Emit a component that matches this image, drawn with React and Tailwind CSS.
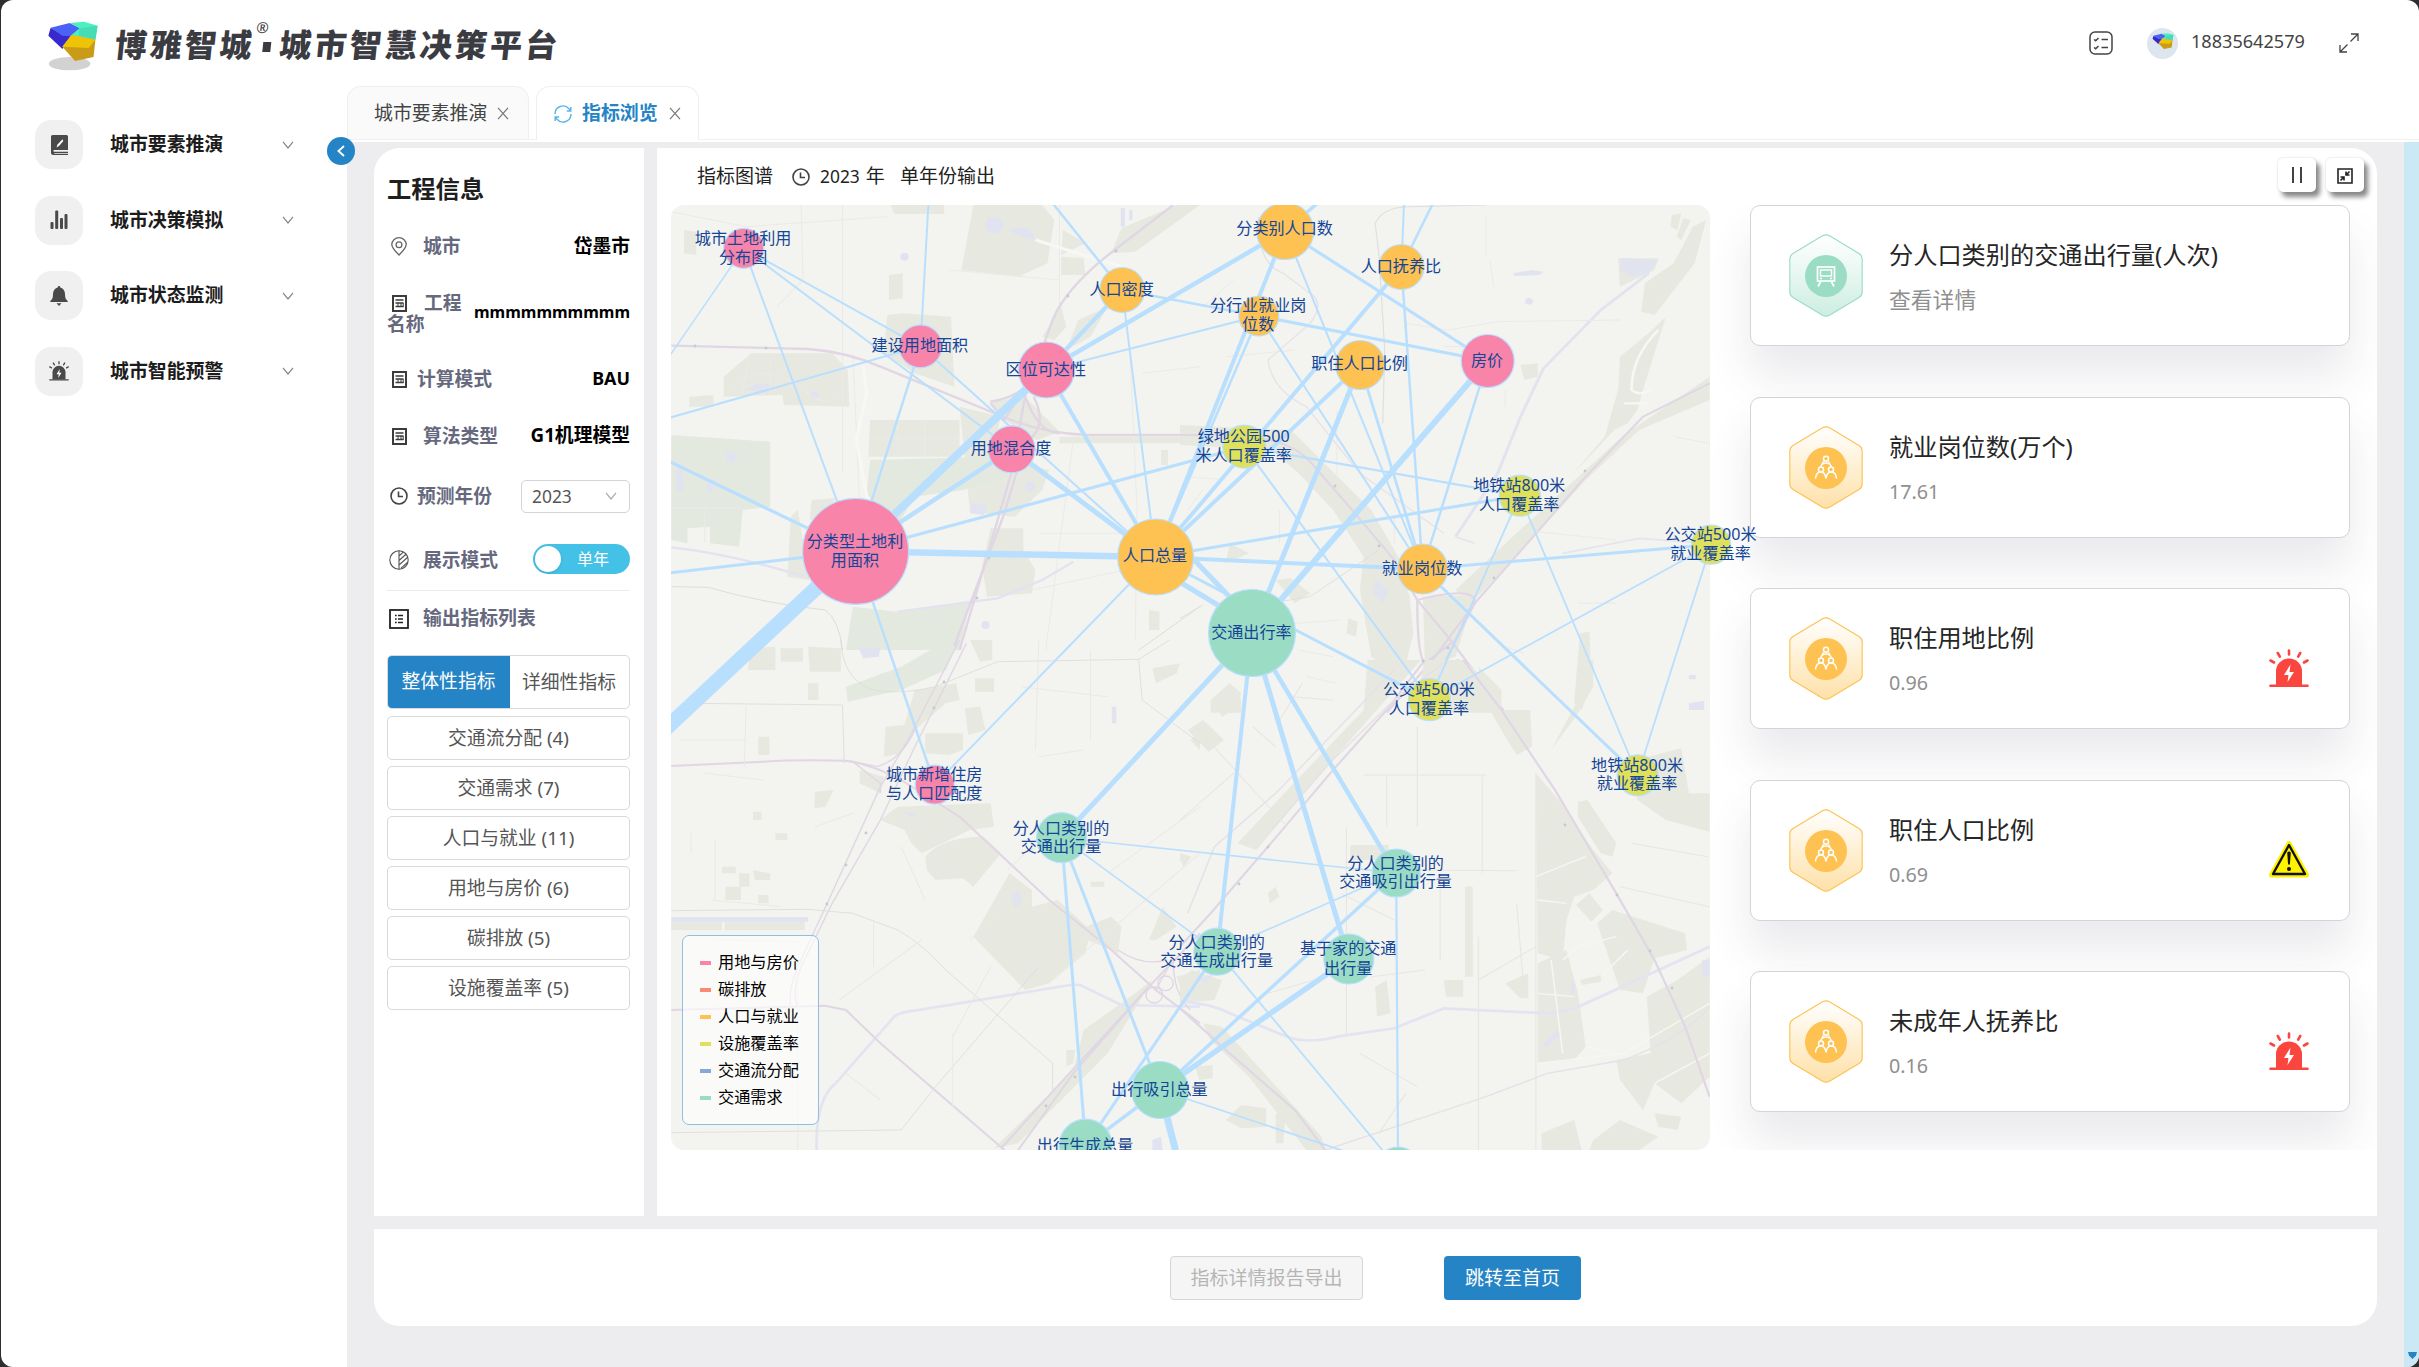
import React from "react";

const PINK = "#f884aa";
const ORANGE = "#fdc252";
const GREEN = "#9bdcc4";
const LIME = "#dfe05c";

const nodes = {
  landMap: { x: 743.7, y: 248.3, r: 20, c: PINK, t: [["城市土地利用", 238.7], ["分布图", 257.3]] },
  built: { x: 920.5, y: 346.3, r: 21.5, c: PINK, t: [["建设用地面积", 345.7]] },
  access: { x: 1046.4, y: 370, r: 28, c: PINK, t: [["区位可达性", 369.3]] },
  mix: { x: 1011.6, y: 449.3, r: 23.5, c: PINK, t: [["用地混合度", 449]] },
  landType: { x: 855.6, y: 551.3, r: 53, c: PINK, t: [["分类型土地利", 541.7], ["用面积", 560.7]] },
  density: { x: 1122.2, y: 290, r: 22.5, c: ORANGE, t: [["人口密度", 289.5]] },
  pop: { x: 1155.6, y: 557, r: 38, c: ORANGE, t: [["人口总量", 556]] },
  popClass: { x: 1285.2, y: 231, r: 28.5, c: ORANGE, t: [["分类别人口数", 228.7]] },
  dependency: { x: 1401.5, y: 267, r: 22.5, c: ORANGE, t: [["人口抚养比", 266.7]] },
  jobsByType: { x: 1258.8, y: 316, r: 20, c: ORANGE, t: [["分行业就业岗", 306], ["位数", 325]] },
  jobHousing: { x: 1360.2, y: 365, r: 24.5, c: ORANGE, t: [["职住人口比例", 364]] },
  price: { x: 1487.7, y: 361, r: 26.5, c: PINK, t: [["房价", 360.3]] },
  park: { x: 1244.3, y: 446.7, r: 21.5, c: LIME, t: [["绿地公园500", 436.7], ["米人口覆盖率", 456]] },
  metroPop: { x: 1519.8, y: 495.7, r: 20.5, c: LIME, t: [["地铁站800米", 486], ["人口覆盖率", 504.3]] },
  busJob: { x: 1711.1, y: 544.7, r: 19.5, c: LIME, t: [["公交站500米", 535], ["就业覆盖率", 553.7]] },
  jobs: { x: 1422.6, y: 569, r: 25, c: ORANGE, t: [["就业岗位数", 568.7]] },
  tripRate: { x: 1252, y: 633, r: 43.5, c: GREEN, t: [["交通出行率", 632.7]] },
  newHousing: { x: 934.8, y: 784.7, r: 19.5, c: PINK, t: [["城市新增住房", 775], ["与人口匹配度", 794]] },
  tripClass: { x: 1061.6, y: 837.7, r: 25, c: GREEN, t: [["分人口类别的", 828.3], ["交通出行量", 846.7]] },
  attractTotal: { x: 1160, y: 1090, r: 28.5, c: GREEN, t: [["出行吸引总量", 1089.3]] },
  produceTotal: { x: 1085.7, y: 1145.7, r: 26.5, c: GREEN, t: [["出行生成总量", 1146]] },
  busPop: { x: 1429.5, y: 699.7, r: 21, c: LIME, t: [["公交站500米", 690], ["人口覆盖率", 708.3]] },
  metroJob: { x: 1637.7, y: 775.3, r: 20.5, c: LIME, t: [["地铁站800米", 765.7], ["就业覆盖率", 784]] },
  attract: { x: 1396.2, y: 873, r: 24, c: GREEN, t: [["分人口类别的", 863.3], ["交通吸引出行量", 881.7]] },
  produce: { x: 1217.3, y: 951.7, r: 23.5, c: GREEN, t: [["分人口类别的", 942.3], ["交通生成出行量", 961]] },
  homeBased: { x: 1348.8, y: 959, r: 25, c: GREEN, t: [["基于家的交通", 949], ["出行量", 968.3]] },
  lower: { x: 1398.1, y: 1169, r: 22, c: GREEN, t: [] },
};

const edges = [
  ["landMap", [660, 370], 1.5], ["landMap", "landType", 2], ["landMap", "built", 2], ["landMap", "mix", 2],
  ["built", [928.9, 195], 2], ["built", [660, 420.5], 2], ["built", "landType", 2.5], ["built", "pop", 2],
  ["access", "landType", 8], ["access", "pop", 4], ["access", "density", 4], ["access", "popClass", 4.5], ["access", "jobsByType", 2],
  ["mix", "landType", 4.5], ["mix", "pop", 5],
  ["density", [1046, 195], 2.5], ["density", "pop", 2], ["density", "jobsByType", 2.5],
  ["landType", [660, 457], 3.2], ["landType", [660, 574], 3], ["landType", "pop", 6.5], ["landType", [660, 734], 15],
  ["landType", "park", 3], ["landType", "newHousing", 2.5],
  ["popClass", "pop", 4], ["jobsByType", "pop", 2.5], ["dependency", "pop", 4], ["jobHousing", "pop", 4],
  ["popClass", "price", 3.2], ["popClass", "jobs", 2], ["popClass", [1327, 195], 3.5],
  ["dependency", [1404.3, 195], 2], ["dependency", [1437, 195], 2.5], ["dependency", "jobs", 2.5],
  ["jobsByType", "price", 3.2], ["jobsByType", "jobs", 2], ["jobHousing", "jobs", 2.8], ["jobHousing", "tripRate", 5],
  ["price", "tripRate", 6], ["price", "jobs", 2.5], ["park", "metroPop", 2.2], ["park", "busPop", 2],
  ["pop", "metroPop", 3], ["pop", "jobs", 4], ["pop", "busPop", 3], ["pop", "newHousing", 2],
  [[1180, 545], [1244, 612], 5], [[1160, 570], [1226, 610], 5],
  ["jobs", "busJob", 3], ["jobs", "metroJob", 3], ["metroPop", "busPop", 1.8], ["metroPop", "metroJob", 1.8],
  ["busJob", "busPop", 1.8], ["busJob", "metroJob", 1.8],
  ["tripRate", "tripClass", 5], ["tripRate", "produce", 4], ["tripRate", "homeBased", 5], ["tripRate", "attract", 4.5],
  ["tripClass", "attract", 1.6], ["tripClass", "produce", 1.6], ["tripClass", "attractTotal", 3], ["tripClass", "produceTotal", 3],
  ["attract", "produce", 1.6], ["attract", "attractTotal", 3.5], ["attract", "lower", 2.2],
  ["homeBased", "attractTotal", 5.5], ["produce", "produceTotal", 3], ["produce", "lower", 1.8],
  ["attractTotal", "produceTotal", 3.5], ["attractTotal", "lower", 1.8], ["attractTotal", [1178, 1160], 7],
];

const at = (p) => (typeof p === "string" ? [nodes[p].x, nodes[p].y] : p);

function BaseMap() {
  return (
    <g fill="none">
      <rect x="671" y="205" width="1039" height="945" fill="#f3f3ef" />
      {/* north-west quarter */}
      <g transform="translate(660 140) scale(0.34439 0.33333)">
        <g fill="#e7e9e0">
          <path d="M910 195H1110L1145 240L1125 370L1040 410L875 390Z" />
          <path d="M670 195H825V222H680Z" />
          <path d="M1170 270L1235 310L1165 345ZM1165 350L1230 355L1235 405H1165Z" />
          <path d="M1340 265L1500 195H1568L1380 335L1310 340Z" />
          <path d="M185 710L265 640H500L545 690L550 800L360 795L355 765L185 770Z" />
          <path d="M85 770L155 765V800H85Z" />
          <path d="M665 405L705 400V475L665 480ZM660 525L705 520L845 530L855 740L740 700L650 640Z" />
          <path d="M610 840H870V950H605Z" />
          <path d="M870 800L990 830L960 950L1130 990L1110 1050L1030 1130L900 1115Z" />
          <path d="M955 785L1060 770L1160 875L1095 900L1000 840Z" />
          <path d="M1165 500L1180 560L1145 600L1110 590Z" />
          <path d="M1160 890H1568V910H1160Z" />
          <path d="M1215 540L1300 500L1250 590L1180 630Z" />
          <path d="M960 1165H1055V1230L1090 1290L1080 1360L950 1370L935 1280Z" />
          <path d="M380 1130L400 1110L435 1320L370 1310Z" />
          <path d="M1455 930H1475V975H1455ZM1420 1410L1450 1415V1470H1420ZM70 270L105 275V345L70 340Z" />
          <path d="M440 1080L510 1075L470 1130L435 1140Z" />
        </g>
        <g fill="#e4e9e0">
          <path d="M33 885L320 905V1100L240 1110L230 1220L145 1210V1160L80 1165V1210L33 1200Z" />
          <path d="M610 960L960 950L1020 1010L880 1050L740 1070L680 1170L600 1060Z" />
          <path d="M560 1400L690 1415L900 1385L870 1530H540Z" />
        </g>
        <g fill="#e1e3f0">
          <circle cx="970" cy="255" r="26" />
          <path d="M1010 270Q1080 245 1090 300L1050 290Z" />
          <circle cx="710" cy="350" r="12" />
          <path d="M250 750Q290 715 330 740L310 760Z" />
          <circle cx="448" cy="765" r="12" />
          <path d="M905 1090L950 1095L940 1125L900 1120Z" />
          <circle cx="1075" cy="1040" r="15" />
          <path d="M1338 205H1350V260H1338ZM1362 210H1372V240H1362Z" />
          <circle cx="945" cy="1455" r="12" />
          <path d="M190 940L225 935L215 970L195 965ZM140 1020L165 1015L150 1060L135 1050ZM45 1000L60 960L70 1050L50 1055Z" />
        </g>
        <g stroke="#eceae6" strokeWidth="3">
          <path d="M33 215L250 260L660 230M530 195V1000M410 195L415 420L340 500M840 390L1160 420M1160 195V500M560 640L580 1100L620 1200M260 640L240 760M320 650V760M215 740Q300 660 400 740T520 760" />
          <path d="M605 895H870M690 840V950M770 840V950M33 1105H240M130 1105V1210M1365 640L1385 1100L1380 1500M1200 900L1120 1530M1400 700L1568 680M1100 1180H1350M1080 1350L1350 1290" />
        </g>
        <path d="M33 1222Q200 1240 420 1310M690 1415L980 1375L1110 1320L1200 1265" stroke="#e3e2f0" strokeWidth="7" />
        <g stroke="#f7f7f4" strokeWidth="9">
          <path d="M590 680L600 760L570 900L610 1120M1090 300L1340 380" />
        </g>
        <g stroke="#e0d6e4" strokeWidth="7">
          <path d="M33 617L430 627Q540 635 640 680L1020 840Q1120 880 1240 885H1568" />
          <path d="M1490 195L1320 330Q1180 440 1140 540L1060 770L1020 1000L870 1530" />
          <path d="M1085 770Q1130 860 1060 910L1000 1120L850 1530" />
          <path d="M960 785Q1040 770 1070 730M1060 770Q1100 880 1160 880M960 790L1000 840L1030 790" />
        </g>
        <path d="M33 1340L140 1342Q300 1390 480 1410Q520 1440 530 1530M1390 1530L1568 1400" stroke="#d8d8d5" strokeWidth="2.5" />
      </g>
      {/* north-east quarter */}
      <g transform="translate(1180 190) scale(0.38265 0.33333)">
        <g fill="#e7e9e0">
          <path d="M1340 110L1375 90L1345 220L1240 375L1205 365L1215 280L1290 220Z" />
          <path d="M1285 75L1310 70L1300 120L1282 110ZM1315 85L1335 90L1310 150L1298 140Z" />
          <path d="M1145 205H1250L1240 240L1150 290Z" />
          <path d="M890 525L935 520V560L900 570Z" />
          <path d="M1150 500L1225 430L1270 380L1215 580L1195 660L1170 700L1135 720L1020 860L1110 740L1145 600Z" />
          <path d="M1160 735L1384 560V630L1200 720L1060 870L870 1110L760 1240L720 1200L860 1050Z" />
          <path d="M0 705L290 720L360 800L500 960L570 1100L600 1220L610 1330L580 1470L500 1400L470 1200L480 1100L400 960L310 850L240 780L0 765Z" />
          <path d="M635 1220L770 1215L720 1400L640 1430Z" />
          <path d="M635 1420L740 1410L830 1530V1568H640Z" />
          <path d="M1045 1330L1070 1325L1075 1470L1050 1560L1030 1540Z" />
          <path d="M440 1285L465 1295L460 1340L435 1330ZM80 1530L130 1480L160 1530V1568H80ZM250 1170L290 1165L340 1210L300 1240Z" />
          <path d="M130 1060L180 1090L120 1120Z" />
        </g>
        <g fill="#e1e4ee">
          <path d="M1155 205L1250 210L1225 250L1180 260L1150 240Z" />
          <path d="M870 250L920 240L950 245L940 255L875 258Z" />
          <circle cx="912" cy="334" r="10" />
          <path d="M510 1170L545 1200L530 1240L505 1210Z" />
        </g>
        <path d="M1225 250L1100 360L950 535L890 680L830 850L720 1040" stroke="#e3e3f0" strokeWidth="8" />
        <path d="M720 1040L770 1060M1000 1090L1200 1045L1384 1060" stroke="#e6e4ee" strokeWidth="5" />
        <g stroke="#e0d6e4" strokeWidth="6">
          <path d="M0 735H100Q280 735 340 815L450 960L560 1110L620 1230L700 1340L850 1568" />
          <path d="M1384 580L1210 680L1060 860L900 1070L770 1240L660 1410L540 1568" />
          <path d="M620 1230Q760 1190 770 1230L720 1350L640 1420Q620 1400 620 1230M770 1240L690 1420L730 1410" />
        </g>
        <path d="M205 80Q200 220 270 250L340 310Q380 340 340 400L230 510Q240 600 330 650L470 850L690 1030" stroke="#e6e1e9" strokeWidth="3.5" />
        <path d="M520 195L510 100Q530 50 600 50L800 45M520 195L535 480L530 700" stroke="#e0dede" strokeWidth="3" />
        <path d="M0 1285L60 1245M180 1250L340 1220L520 1080" stroke="#dededb" strokeWidth="2.5" />
        <g stroke="#ebe9e5" strokeWidth="2.5">
          <path d="M590 400L700 420L830 395L1150 390M800 80V200M810 210L820 290M850 600V650M890 1020L1140 1050M850 1370L900 1390M1040 1240H1140M120 500L300 480M140 270L60 350M1290 740L1384 760M690 470L840 470M410 660V860M560 980V1060M260 960V1060" />
          <path d="M1250 420Q1180 500 1180 600Q1200 620 1230 600M1160 640L1220 640" stroke="#f7f7f4" strokeWidth="7" />
          <path d="M300 1300L420 1290M310 1380L400 1400M330 1460L410 1480M480 1300L540 1340M20 860L120 870M20 960L60 900" />
        </g>
      </g>
      {/* south-west quarter */}
      <g transform="translate(660 640) scale(0.34439 0.33333)">
        <g fill="#e7e9e0">
          <path d="M265 25L335 20V90H255ZM430 20L525 25V95H435ZM350 25H415V65H350ZM430 130H460V180H430Z" />
          <path d="M740 150L860 130L870 180L830 190L740 270L700 340L650 350L655 260L710 255Z" />
          <path d="M885 205L930 200L945 270L895 285ZM915 115H970V155H915ZM900 0H965V60L930 65Z" />
          <path d="M770 280H880V330L840 345L770 340ZM580 390L650 410L640 460L580 430ZM450 455L505 450L480 500L448 505Z" />
          <path d="M640 540L690 500L960 490L970 560L900 570L760 640L730 610L710 570Z" />
          <path d="M770 650Q820 590 940 590L990 640L910 740L880 715L800 720L775 690Z" />
          <path d="M1015 700L1080 750L1080 800L1155 780L1250 870L1235 940L1130 1030L1060 1050L910 890Z" />
          <path d="M1190 880L1310 830L1340 860L1330 940L1290 920Z" />
          <path d="M1420 900L1460 800L1500 860L1440 900ZM1250 725H1290V740H1250ZM1500 1010L1568 990V1080L1520 1070Z" />
          <path d="M33 840H180V870H33ZM188 835H420V870H188ZM285 290H318V345H285Z" />
          <path d="M1180 1230H1205L1200 1270L1180 1280ZM1230 1170L1380 1060L1430 1020L1300 1240L1040 1510L970 1525L1200 1290Z" />
          <path d="M1430 85L1510 70L1500 100L1440 130ZM1540 300L1568 270V330Z" />
          <path d="M180 680H220V700H180ZM230 700H260V740H230ZM270 690L320 700V720H275ZM190 740H235V780H190ZM285 765H315V790H285ZM335 580H370V600H335ZM270 515H295V540H270Z" />
        </g>
        <path d="M540 140L700 80L820 10L860 20L830 90L700 150L545 185Z" fill="#e4e9e0" />
        <g fill="#e1e3f0">
          <path d="M575 20L640 25L635 50L590 55ZM705 515L740 520L735 535ZM1020 765L1045 750L1050 790L1030 805ZM1312 200H1325V250H1312ZM1430 1500L1455 1490L1460 1530H1430Z" />
          <path d="M33 832H430V845H33Z" />
        </g>
        <path d="M455 1530Q450 1380 510 1330L680 1130Q700 1115 740 1112L1190 1035H1220L1340 1095L1568 1100" stroke="#e3e4f1" strokeWidth="8" />
        <g stroke="#e0d6e4" strokeWidth="6">
          <path d="M33 378L300 365Q400 358 540 362Q620 375 700 420L870 530L1130 780L1300 920L1440 1050L1568 1150" />
          <path d="M870 0L720 300L640 440L490 780L400 980Q370 1060 380 1095" strokeWidth="4" />
          <path d="M890 10L740 320L640 540L500 790L410 980Q380 1060 400 1100" strokeWidth="4" />
          <path d="M33 1110L480 1097L540 1110L640 1210L1000 1530" />
          <path d="M1568 880L1420 1040L1200 1300L1040 1530M1420 1040L1180 1310L990 1525" />
          <path d="M550 362L630 380Q700 360 740 270M560 365L640 430L640 460M1330 930Q1400 980 1470 960M1440 1050Q1470 990 1490 960Q1490 1060 1540 1110" strokeWidth="4" />
          <circle cx="1435" cy="1065" r="24" strokeWidth="4" />
          <circle cx="1468" cy="1030" r="22" strokeWidth="4" />
        </g>
        <g stroke="#dcddda" strokeWidth="2.5">
          <path d="M525 0Q530 120 620 150Q700 165 800 140L980 65L1390 58L1480 0M1390 58L1400 180L1568 310" />
          <path d="M33 812L430 808L560 820L690 870Q760 910 830 990L1140 1270L1140 1350M33 1478L700 1470L800 1340L1100 980" />
          <path d="M100 190L530 195L535 370" />
        </g>
        <g stroke="#ebe9e5" strokeWidth="3">
          <path d="M1100 0L1090 330M60 300H250M250 200L245 380M130 400L300 420M90 580V640M160 600V780M150 780L350 800M450 560L560 520M400 960V1530" />
          <path d="M1100 350L1230 330M1250 30V300M980 820L900 900M1010 690L1060 640L1200 560M1150 1010L1330 850L1568 640M770 780L700 620M540 1300L640 1380M850 1180V1400M620 840V980M960 980L850 1190M520 1080L760 900M1300 700L1568 500M160 900L420 905M1050 140L1300 170" />
        </g>
      </g>
      {/* south-east quarter */}
      <g transform="translate(1180 660) scale(0.38265 0.33333)">
        <g fill="#e7e9e0">
          <path d="M85 120L130 70L160 100L150 140L110 170ZM20 210L60 180L115 240L75 275Z" />
          <path d="M0 600V580L30 590L10 620ZM0 960L30 930L110 960L90 1020L0 1030Z" />
          <path d="M490 0H630L360 350L200 570L150 550L330 330L480 150Z" />
          <path d="M780 20L840 90V150H915L920 260L880 285L850 230L790 110Z" />
          <path d="M1050 0H1080V80L1040 160L970 270L1040 120Z" />
          <path d="M930 340L990 420L1080 570L1130 640L1080 690L1030 710L1010 780L1000 900L935 880Z" />
          <path d="M1040 425L1065 420L1140 550L1130 590L1100 580L1040 470Z" />
          <path d="M1190 300L1310 265L1330 400H1384V515L1270 480L1195 420Z" />
          <path d="M1035 735L1070 700L1105 750L1075 785ZM1090 790L1130 750L1320 820L1325 870L1240 895L1210 1000L1150 990Z" />
          <path d="M935 910L1010 870L1040 1000L1060 1160L1030 1200L935 1210Z" />
          <path d="M1384 890V1250L1310 1330L1240 1270L1210 1350L1150 1260L1140 1200L1230 1180L1220 1010L1300 960Z" />
          <path d="M945 1420L1030 1380L1050 1470H945ZM1080 1440L1150 1380L1250 1430L1200 1470H1070ZM1240 1360L1310 1370L1300 1410L1250 1400Z" />
          <path d="M510 980L540 960L550 1060L515 1070ZM690 960H740V1010H695ZM745 680H765V950H745ZM850 970L910 940V1015H890ZM1045 960L1100 945V965L1050 975Z" />
          <path d="M60 1090L110 1100L370 1430L380 1470H330L180 1250L80 1140ZM120 1380L160 1335L225 1345V1400L160 1405ZM250 1360L275 1370L270 1450H250ZM40 1220L85 1215V1255L50 1260Z" />
          <path d="M445 555H545V600H445ZM230 700L250 680L260 710L235 730Z" />
          <path d="M640 0L740 0L800 60H630Z" />
        </g>
        <g fill="#e1e3f0">
          <path d="M1330 45H1348V58H1330ZM1330 130L1370 122V150H1330ZM1365 900H1384V950H1365ZM1020 965L1035 975L1025 1020ZM985 1110L995 1125L955 1165L950 1150ZM50 960L90 940L70 970Z" />
        </g>
        <path d="M0 1025Q80 1030 130 1060L290 1135Q340 1150 410 1130L560 1105L690 1045L960 1060Q1020 1055 1080 1020L1384 860" stroke="#e3e4f1" strokeWidth="8" />
        <path d="M380 1470L800 1310L960 1240L1160 1200Q1320 1130 1384 1040M20 760L90 560L250 400L560 30" stroke="#e5e1eb" strokeWidth="4" />
        <g stroke="#f6f6f3" strokeWidth="4">
          <path d="M935 1210L1160 1180L1384 1030M1000 900L1040 860L1140 830M930 650L1060 590M1100 950L1170 870M1060 1160L1140 1180M1240 1270L1384 1180M970 900L1000 1180M935 1000L1030 1010M935 720L1010 730" />
        </g>
        <g stroke="#e0d6e4" strokeWidth="6">
          <path d="M740 0L840 150L980 390L1140 700L1240 900L1320 1100L1384 1310" />
          <path d="M640 0L540 150L400 330L230 560L80 760L0 860" />
          <path d="M0 1045L120 1170L300 1350L380 1470" />
          <path d="M700 0L560 120L390 310L240 510" strokeWidth="4" stroke="#e6e0e8" />
        </g>
        <g stroke="#e7e6e2" strokeWidth="3">
          <path d="M480 345H800M790 350V640M435 500V1130M930 340V1470M600 630L880 632M620 200V500M540 350V500M780 830V1470M680 650V900M880 730L900 1010M500 950L640 930M420 700L560 780M930 860L780 960" />
          <path d="M40 200L280 500M0 480L140 340M320 70L260 180M290 110L400 120M190 200L250 260M1180 550L1380 590M1150 680L1384 740M470 1180L620 1280M590 1300L520 1420M230 1000L350 960" />
        </g>
      </g>
      <g fill="#c4cbd0">
        {[[695, 346], [766, 348], [1068, 296], [1116, 251], [989, 558], [977, 598], [1335, 486], [1379, 546], [1585, 471], [1494, 578], [1448, 648], [1423, 661], [1565, 825], [1617, 895], [1650, 951], [1672, 988], [1268, 847], [1239, 884], [944, 682], [934, 708], [866, 833], [846, 865], [827, 904], [1075, 1077], [1046, 1106]].map(
          ([x, y]) => (
            <circle key={`${x}-${y}`} cx={x} cy={y} r="1.4" />
          )
        )}
      </g>
    </g>
  );
}

function GraphMap() {
  return (
    <svg className="pointer-events-none absolute left-0 top-0 z-10" width="1090" height="945" viewBox="671 205 1090 945">
      <defs>
        <clipPath id="mapFrame">
          <rect x="671" y="205" width="1039" height="945" rx="13" />
        </clipPath>
      </defs>
      <g clipPath="url(#mapFrame)">
        <BaseMap />
      </g>
      <g stroke="#b9dfff">
        {edges.map(([a, b, w], i) => {
          const [x1, y1] = at(a);
          const [x2, y2] = at(b);
          const outside = x1 < 671 || x2 < 671;
          return <line key={i} x1={x1} y1={y1} x2={x2} y2={y2} strokeWidth={w} clipPath={outside ? "url(#mapFrame)" : undefined} />;
        })}
        {Object.entries(nodes).map(([k, n]) => (
          <circle key={k} cx={n.x} cy={n.y} r={n.r} fill={n.c} strokeWidth="1.2" />
        ))}
      </g>
      <g fill="#154596" fontSize="16.1" textAnchor="middle" fontFamily="'Noto Sans','Noto Sans CJK SC',sans-serif">
        {Object.entries(nodes).flatMap(([k, n]) =>
          n.t.map(([s, y]) => (
            <text key={k + s} x={n.x - 0.6} y={y + 5.3}>
              {s}
            </text>
          ))
        )}
      </g>
    </svg>
  );
}

function Cube({ className, shadow = true }) {
  return (
    <svg className={className} viewBox="100 62 115 150" preserveAspectRatio="none">
      {shadow && <ellipse cx="150" cy="190" rx="46" ry="20" fill="#d2d2d2" />}
      <path d="M108 82L136 104L154 106L134 146L103 106Z" fill="#3a28cf" />
      <path d="M108 82L150 68L174 84L154 108L134 106Z" fill="#4a63f6" />
      <path d="M150 68L182 64L212 76L207 118L154 104L172 84Z" fill="#4bf0c0" />
      <path d="M172 84L212 76L207 118L170 106Z" fill="#45dcb6" />
      <path d="M134 139L154 104L207 118L203 170L162 182Z" fill="#c99b17" />
      <path d="M134 139L154 104L207 118L192 143Z" fill="#efc406" />
    </svg>
  );
}

function Chevron({ className = "" }) {
  return (
    <svg className={className} width="12" height="8" viewBox="0 0 12 8" fill="none" stroke="currentColor" strokeWidth="1.2">
      <path d="M1 .8L6 7L11 .8" />
    </svg>
  );
}

function Cross({ className = "" }) {
  return (
    <svg className={className} width="12" height="13" viewBox="0 0 12 13" fill="none" stroke="#777" strokeWidth="1.2">
      <path d="M1 .8L11 12.2M11 .8L1 12.2" />
    </svg>
  );
}

function Alarm({ className }) {
  return (
    <svg className={className} viewBox="0 0 40 39" preserveAspectRatio="none">
      <path d="M7 36V22a13 12.5 0 0 1 26 0v14z" fill="currentColor" />
      <path d="M1.5 36.8h37M20 1.5v4M8.8 4l2 3.6M31.2 4l-2 3.6M1.5 11.5l3.5 2M38.5 11.5l-3.5 2" stroke="currentColor" strokeWidth="2.6" strokeLinecap="round" />
      <path d="M21.5 15.5L15 26h4.5L18.5 33L25 23h-4.5z" fill="#fff" />
    </svg>
  );
}

function Book() {
  return (
    <svg width="17" height="20" viewBox="0 0 17 20">
      <path d="M1.5 0h14A1.500 1.500 0 0 1 17 1.500V15H3.200a.8.800 0 0 0 0 1.700H17V18H3.200v.7H17V20H2.500A2.500 2.500 0 0 1 0 17.500V1.500A1.500 1.500 0 0 1 1.500 0z" fill="#4a4a4a" />
      <path d="M11.500 4.200L6.500 9.500L5.500 12.500L8 11L12.300 6z" fill="#fff" />
    </svg>
  );
}

function Bars() {
  return (
    <svg width="18" height="20" viewBox="0 0 18 20" fill="#4a4a4a">
      <rect x="0.5" y="12" width="3" height="7" rx="1" />
      <rect x="5.2" y="0.5" width="3" height="18.5" rx="1" />
      <rect x="10" y="8" width="3" height="11" rx="1" />
      <rect x="14.5" y="4" width="3" height="15" rx="1" />
    </svg>
  );
}

function Bell() {
  return (
    <svg width="18" height="20" viewBox="0 0 18 20" fill="#4a4a4a">
      <path d="M9 0a1.200 1.200 0 0 1 1.200 1.400C13 2 15 4.500 15 8c0 4 .8 5.500 2.700 7v1H.3v-1C2.200 13.500 3 12 3 8c0-3.500 2-6 4.800-6.600A1.200 1.200 0 0 1 9 0z" />
      <path d="M6.500 17.300h5L9 20z" />
    </svg>
  );
}

function Sheet() {
  return (
    <svg className="inline-block shrink-0" width="15" height="17" viewBox="0 0 15 17" fill="none" stroke="#3c3c3c" strokeWidth="2">
      <rect x="1" y="1" width="13" height="15" />
      <path d="M3.500 5h8M3.500 8h8M3.500 11.500h8" strokeWidth="1.400" />
      <path d="M6 8v4M9 8v4M11.200 8v4" strokeWidth="1" />
    </svg>
  );
}

function Clock({ className = "" }) {
  return (
    <svg className={`shrink-0 ${className}`} width="18" height="18" viewBox="0 0 18 18" fill="none" stroke="#444" strokeWidth="1.6">
      <circle cx="9" cy="9" r="8" />
      <path d="M8.500 4.500V9.500H13" />
    </svg>
  );
}

function Pin() {
  return (
    <svg className="shrink-0" width="16" height="19" viewBox="0 0 16 19" fill="none" stroke="#666" strokeWidth="1.3">
      <path d="M8 18C3.500 13.500 .8 11 .8 7.500a7.200 6.800 0 0 1 14.400 0C15.200 11 12.500 13.500 8 18z" />
      <circle cx="8" cy="7.700" r="2.900" />
    </svg>
  );
}

function HalfDisc() {
  return (
    <svg className="shrink-0" width="20" height="20" viewBox="0 0 20 20" fill="none" stroke="#555" strokeWidth="1.1">
      <circle cx="10" cy="10" r="9.2" />
      <path d="M10 .8v18.400M10 6l4.500-4.200M10 10.500l7.300-6.500M10 15l9-8M12 18.200l7-6.200" />
    </svg>
  );
}

function ListBox() {
  return (
    <svg className="shrink-0" width="20" height="20" viewBox="0 0 20 20" fill="none" stroke="#222" strokeWidth="1.8">
      <rect x="1" y="1" width="18" height="18" />
      <path d="M6 6.500h1.700M9 6.500h5M6 10h1.700M9 10h5M6 13.500h1.700M9 13.500h5" strokeWidth="1.4" />
    </svg>
  );
}

function Hex({ kind }) {
  const green = kind === "metro";
  const c = green ? "#9bdcc4" : "#fdc252";
  const id = green ? "hexGreen" : "hexOrange";
  return (
    <svg className="shrink-0" width="74" height="83" viewBox="0 0 74 83">
      <defs>
        <linearGradient id={id} x1="0" y1="0" x2="0" y2="1">
          <stop offset="0" stopColor={c} stopOpacity="0" />
          <stop offset="1" stopColor={c} stopOpacity="0.5" />
        </linearGradient>
      </defs>
      <path d="M33.500 1.800Q37 0 40.500 1.800L70 19.500Q73.200 21.500 73.200 25V58Q73.200 61.500 70 63.500L40.500 81.200Q37 83 33.500 81.200L4 63.500Q.8 61.500 .8 58V25Q.8 21.500 4 19.500Z" fill={`url(#${id})`} stroke={c} strokeWidth="1.1" />
      <circle cx="37" cy="42" r="21" fill={c} />
      {green ? (
        <g fill="none" stroke="#fff" strokeWidth="1.7">
          <rect x="28.5" y="33" width="17" height="14" />
          <rect x="31.5" y="36" width="11" height="6" strokeWidth="1.4" />
          <path d="M32 47l-3 5.500M42 47l3 5.500M31 44.500h2M41 44.500h2" />
        </g>
      ) : (
        <g fill="none" stroke="#fff" strokeWidth="1.5">
          <circle cx="37" cy="32.8" r="2.5" />
          <circle cx="32" cy="43.5" r="2.5" />
          <circle cx="42" cy="43.5" r="2.5" />
          <path d="M31.500 41L34.500 35.500M42.500 41L39.500 35.500M33 38.500Q37 35.500 41 38.500M26.500 52.500Q27 46 32 46Q36 46 37 52.500Q38 46 42 46Q47 46 47.500 52.500" />
        </g>
      )}
    </svg>
  );
}

const menu = [
  ["城市要素推演", <Book />],
  ["城市决策模拟", <Bars />],
  ["城市状态监测", <Bell />],
  ["城市智能预警", <Alarm className="h-[20px] w-[20px] text-[#4a4a4a]" />],
];

const groups = ["交通流分配 (4)", "交通需求 (7)", "人口与就业 (11)", "用地与房价 (6)", "碳排放 (5)", "设施覆盖率 (5)"];

const legend = [
  ["用地与房价", "bg-[#f884aa]"],
  ["碳排放", "bg-[#fb8a72]"],
  ["人口与就业", "bg-[#fdc252]"],
  ["设施覆盖率", "bg-[#dfe05c]"],
  ["交通流分配", "bg-[#86a8d6]"],
  ["交通需求", "bg-[#9bdcc4]"],
];

const cards = [
  ["分人口类别的交通出行量(人次)", "查看详情", "metro", null],
  ["就业岗位数(万个)", "17.61", "people", null],
  ["职住用地比例", "0.96", "people", "alarm"],
  ["职住人口比例", "0.69", "people", "warn"],
  ["未成年人抚养比", "0.16", "people", "alarm"],
];

function Header() {
  return (
    <header className="flex h-[84px] shrink-0 items-start pl-[46px]">
      <Cube className="mt-[21px] h-[50px] w-[52px]" />
      <div className="ml-[16px] mt-[23px] flex -skew-x-6 whitespace-nowrap text-[32px] font-black leading-[44px] tracking-[2.9px] text-[#3b3b42]">
        <span>博雅智城</span>
        <span className="-mt-[6px] w-[11px] text-[15px] font-normal leading-[20px] tracking-normal">®</span>
        <span className="-ml-[3px] mt-[19px] mr-[9px] h-[10px] w-[8px] bg-[#3b3b42]" />
        <span className="tracking-[3.1px]">城市智慧决策平台</span>
      </div>
      <div className="ml-auto mr-[60px] flex h-[86px] items-center">
        <svg width="24" height="24" viewBox="0 0 24 24" fill="none" stroke="#444" strokeWidth="1.5">
          <rect x="1" y="1" width="22" height="22" rx="5" />
          <path d="M5 8.500l1.700 1.200L9.500 7M12.500 8.500h6.500M5 16.500l1.700 1.200L9.500 15M12.500 16.500h6.500" />
        </svg>
        <div className="ml-[34px] flex size-[31px] items-center justify-center rounded-full bg-[#dde6ef]">
          <Cube className="h-[20px] w-[22px]" shadow={false} />
        </div>
        <span className="mb-[2px] ml-[13px] w-[116px] text-[18.1px] text-[#444]">18835642579</span>
        <svg className="ml-[32px]" width="20" height="20" viewBox="0 0 20 20" fill="none" stroke="#444" strokeWidth="1.3">
          <path d="M12 1h7v7M19 1l-7.500 7.500M8 19H1v-7M1 19l7.500-7.500" />
        </svg>
      </div>
    </header>
  );
}

function InfoRow({ icon, label, gap, height, children }) {
  return (
    <div className={`flex items-center ${height}`}>
      <span className="flex w-[24px] shrink-0 justify-center">{icon}</span>
      <span className={`font-bold text-[#66697e] ${gap}`}>{label}</span>
      <span className="ml-auto font-bold text-black">{children}</span>
    </div>
  );
}

function ProjectPanel() {
  return (
    <section className="w-[270px] shrink-0 rounded-tl-[26px] bg-white pl-[13px] pr-[14px] text-[18.8px]">
      <h2 className="h-[82px] text-[24.3px] font-bold leading-[81px] text-[#1f1f1f]">工程信息</h2>
      <InfoRow icon={<Pin />} label="城市" gap="ml-[12px]" height="h-[33px]">岱墨市</InfoRow>
      <div className="flex h-[96px] items-center">
        <div className="w-[80px] pt-[5px] font-bold leading-[21px] text-[#66697e]">
          <span className="mr-[17px] inline-block pl-[5px] align-[1px] leading-none"><Sheet /></span>工程<br />名称
        </div>
        <span className="ml-auto pt-[1px] text-[16px] font-bold text-black">mmmmmmmmmm</span>
      </div>
      <InfoRow icon={<Sheet />} label="计算模式" gap="ml-[6px]" height="h-[40px]"><span className="mb-[2px] block text-[17.9px]">BAU</span></InfoRow>
      <InfoRow icon={<Sheet />} label="算法类型" gap="ml-[12px]" height="h-[74px]"><span className="mb-[2px] block text-[18.8px]">G1机理模型</span></InfoRow>
      <InfoRow icon={<Clock />} label="预测年份" gap="ml-[6px]" height="h-[46px]">
        <span className="flex h-[33px] w-[109px] items-center justify-between rounded-[5px] border border-[#d4d4d4] pl-[10px] pr-[12px] text-[17.4px] font-normal text-[#555]">
          2023
          <Chevron className="text-[#aaa]" />
        </span>
      </InfoRow>
      <div className="mt-[11px] border-b border-[#ececec]">
        <InfoRow icon={<HalfDisc />} label="展示模式" gap="ml-[12px]" height="h-[60px]">
          <span className="mb-[2px] flex h-[30px] w-[97px] items-center rounded-full bg-[#43c1e6] pl-[2px] text-[16px] font-normal text-white">
            <span className="size-[26px] rounded-full bg-white shadow" />
            <span className="ml-[16px]">单年</span>
          </span>
        </InfoRow>
      </div>
      <div className="flex h-[55px] items-center font-bold text-[#66697e]">
        <span className="ml-[2px] mr-[14px]"><ListBox /></span>输出指标列表
      </div>
      <div className="mt-[9px] flex h-[54px] overflow-hidden rounded-[5px] border border-[#d9d9d9] text-center leading-[53px] text-[#555]">
        <div className="-m-px h-[54px] w-[123px] bg-[#2584c6] text-white">整体性指标</div>
        <div className="flex-1">详细性指标</div>
      </div>
      <div className="mt-[7px] flex flex-col gap-[6px] text-[#555]">
        {groups.map((g) => (
          <div key={g} className="h-[44px] rounded-[5px] border border-[#d9d9d9] text-center leading-[42px]">{g}</div>
        ))}
      </div>
    </section>
  );
}

function IndicatorCard({ title, value, kind, alert }) {
  return (
    <div className="flex h-[141px] shrink-0 rounded-[10px] border border-[#d3d4d8] bg-white pl-[38px] pr-[40px] shadow-[0_30px_44px_rgba(60,60,90,0.11)]">
      <div className="pt-[28px]"><Hex kind={kind} /></div>
      <div className="ml-[26px] pt-[31px]">
        <div className="text-[24.2px] leading-[36px] text-[#262626]">{title}</div>
        <div className={value === "查看详情" ? "mt-[10px] text-[21.8px] leading-[34px] text-[#8f8f8f]" : "mt-[10px] text-[19.7px] leading-[34px] text-[#8f8f8f]"}>{value}</div>
      </div>
      {alert === "alarm" && <Alarm className="ml-auto mt-[60px] h-[39px] w-[40px] text-[#fb4640]" />}
      {alert === "warn" && (
        <svg className="ml-auto mt-[60px]" width="40" height="37" viewBox="0 0 40 37">
          <path d="M20 2.500L37.500 34H2.500Z" fill="#fff200" stroke="#fff200" strokeWidth="5" strokeLinejoin="round" />
          <path d="M20 4L36 33H4Z" fill="#fff200" stroke="#111" strokeWidth="2.4" strokeLinejoin="round" />
          <path d="M18.200 11.500Q20 9.500 21.800 11.500L20.900 23.500H19.100Z" fill="#111" />
          <circle cx="20" cy="28" r="2" fill="#111" />
        </svg>
      )}
    </div>
  );
}

function MapPanel() {
  return (
    <section className="flex-1 rounded-tr-[26px] bg-white pl-[14px]">
      <div className="flex h-[57px] items-center pl-[26px] text-[19px] text-[#222]">
        <span>指标图谱</span>
        <Clock className="ml-[19px] mt-px" />
        <span className="ml-[10px] flex w-[66px] items-center gap-[6px]"><span className="text-[17.4px]">2023</span>年</span>
        <span className="ml-[14px]">单年份输出</span>
        <div className="mb-[4px] ml-auto mr-[13px] flex gap-[10px]">
          <span className="flex h-[34px] w-[38px] items-center justify-center rounded-[5px] bg-white shadow-[4px_5px_5px_#888,0_0_2px_#ccc]">
            <svg width="10" height="16" viewBox="0 0 10 16" stroke="#222" strokeWidth="1.7"><path d="M1 0v16M9 0v16" /></svg>
          </span>
          <span className="flex h-[34px] w-[38px] items-center justify-center rounded-[5px] bg-white shadow-[4px_5px_5px_#888,0_0_2px_#ccc]">
            <svg className="mt-[3px]" width="16" height="16" viewBox="0 0 16 16" fill="none" stroke="#222" strokeWidth="1.6">
              <path d="M1 1h14v14H1zM9 3.500V7h3.500M9 7l3.500-3.500M3.500 9H7v3.500M7 9l-3.500 3.500" />
            </svg>
          </span>
        </div>
      </div>
      <div className="relative flex h-[945px]">
        <div className="relative w-[1039px] shrink-0">
          <GraphMap />
          <div className="absolute left-[11px] top-[730px] z-20 flex h-[190px] w-[137px] flex-col justify-center rounded-[7px] border border-[#8fbfe0] bg-white/60 pl-[17px] text-[16.2px] leading-[27px] text-black">
            {legend.map(([name, color]) => (
              <div key={name} className="flex items-center">
                <span className={`mr-[7px] h-[4px] w-[11px] ${color}`} />
                {name}
              </div>
            ))}
          </div>
        </div>
        <div className="flex flex-1 flex-col gap-[50.6px] overflow-hidden pl-[40px] pr-[27px]">
          {cards.map(([title, value, kind, alert]) => (
            <IndicatorCard key={title} title={title} value={value} kind={kind} alert={alert} />
          ))}
        </div>
      </div>
    </section>
  );
}

export default function App() {
  return (
    <div className="h-[1367px] w-full overflow-hidden bg-[#2e2e30] pl-px font-['Noto_Sans','Noto_Sans_CJK_SC',sans-serif]">
      <div className="flex h-full flex-col overflow-hidden rounded-[12px] bg-white">
        <Header />
        <div className="flex min-h-0 flex-1">
          <nav className="flex w-[346px] shrink-0 flex-col gap-[26.5px] pl-[34px] pt-[36px]">
            {menu.map(([name, icon]) => (
              <div key={name} className="flex h-[49px] items-center">
                <span className="flex h-[49px] w-[48px] items-center justify-center rounded-[16px] bg-[#f0f0f0]">{icon}</span>
                <span className="ml-[27px] text-[18.9px] font-bold text-[#1c1c1c]">{name}</span>
                <Chevron className="ml-[59px] text-[#888]" />
              </div>
            ))}
          </nav>
          <div className="relative flex min-w-0 flex-1 flex-col">
            <div className="flex h-[56px] shrink-0 items-end gap-[7px] border-b border-[#f0f0f0] text-[18.9px]">
              <div className="flex h-[53px] w-[182px] items-center rounded-t-[14px] border border-b-0 border-[#efefef] bg-[#fafafa] pl-[26px] text-[#444]">
                城市要素推演
                <Cross className="ml-[10px]" />
              </div>
              <div className="-mb-px flex h-[54px] w-[163px] items-center rounded-t-[14px] border border-b-0 border-[#efefef] bg-white pl-[16px] font-bold text-[#2584c6]">
                <svg className="mr-[9px]" width="20" height="20" viewBox="0 0 20 20" fill="none" stroke="#5bb4e6" strokeWidth="1.4">
                  <path d="M2 10a8 8 0 0 1 14-5.300L17.500 6.500M18 10a8 8 0 0 1-14 5.300L2.500 13.500M17.800 3v4h-4M2.200 17v-4h4" />
                </svg>
                指标浏览
                <Cross className="ml-[11px]" />
              </div>
            </div>
            <div className="flex min-h-0 flex-1 pt-[2px]">
              <div className="flex flex-1 flex-col bg-[#ededf0] pl-[27px] pr-[27px] pt-[6px]">
                <div className="flex h-[1068px] gap-[13px]">
                  <ProjectPanel />
                  <MapPanel />
                </div>
                <div className="mt-[13px] flex h-[97px] items-start rounded-b-[26px] bg-white pl-[796px] pt-[27px] text-[19px] leading-[42px]">
                  <div className="h-[44px] w-[193px] rounded-[4px] border border-[#d6d6d6] bg-[#f5f5f5] text-center text-[#b5b5b5]">指标详情报告导出</div>
                  <div className="ml-[81px] h-[44px] w-[137px] rounded-[4px] bg-[#2584c6] text-center leading-[44px] text-white">跳转至首页</div>
                </div>
              </div>
              <div className="flex w-[15px] shrink-0 items-end bg-[#cbe9f5] pb-[8px] pl-[4px]">
                <svg width="9" height="7" viewBox="0 0 9 7"><path d="M0 0h9L8 3.500L4.500 7L1 3.500z" fill="#2584c6" /></svg>
              </div>
            </div>
            <div className="absolute -left-[20px] top-[53px] flex size-[28px] items-center justify-center rounded-full bg-[#2584c6]">
              <svg width="8" height="12" viewBox="0 0 8 12" fill="none" stroke="#fff" strokeWidth="1.9"><path d="M7 1L1.500 6L7 11" /></svg>
            </div>
          </div>
        </div>
      </div>
    </div>
  );
}
